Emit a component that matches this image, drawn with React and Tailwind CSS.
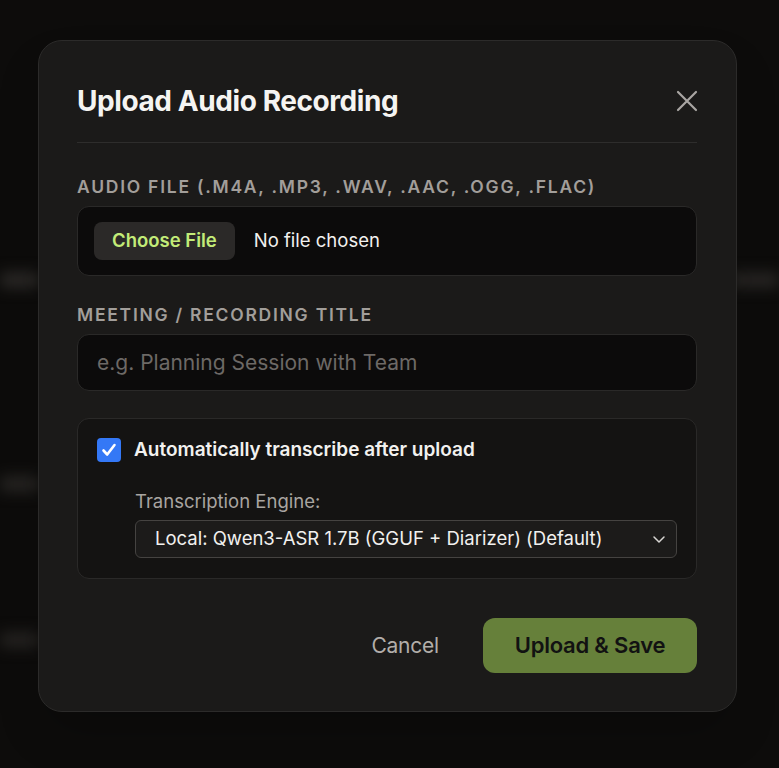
import { useState } from 'react';

export default function App() {
  const [auto, setAuto] = useState(true);
  const [title, setTitle] = useState('');

  return (
    <div
      className="relative min-h-screen w-full overflow-hidden bg-[#0d0c0b]"
      style={{ fontFamily: 'Inter, "Noto Sans", sans-serif' }}
    >
      {/* blurred page behind the dialog */}
      <div className="flex flex-col pt-[272px] blur-[7px]">
        <div className="flex justify-between">
          <div className="h-[16px] w-[40px] rounded bg-[#2a2826]" />
          <div className="h-[16px] w-[50px] rounded bg-[#272523]" />
        </div>
        <div className="mt-[188px] h-[16px] w-[40px] rounded bg-[#262422]" />
        <div className="mt-[140px] h-[16px] w-[40px] rounded bg-[#242220]" />
      </div>

      <div className="absolute inset-0 flex items-start justify-start pl-[38px] pt-[40px]">
        <div className="w-[699px] rounded-[24px] border border-[#2c2b2a] bg-[#1b1a19] pl-[38px] pr-[39px] pt-[40px] pb-[38px] shadow-2xl">
          <div className="flex items-center justify-between pb-[21px] border-b border-[#2e2d2c]">
            <h2 className="text-[28px] font-bold text-[#f5f4f2] tracking-[-0.015em] leading-[40px]">
              Upload Audio Recording
            </h2>
            <button className="mr-[-1px] text-[#a9a6a3]">
              <svg width="22" height="22" viewBox="0 0 22 22" fill="none" stroke="currentColor" strokeWidth="2.2" strokeLinecap="round">
                <path d="M2 2L20 20M20 2L2 20" />
              </svg>
            </button>
          </div>

          <label className="mt-[33px] block text-[17.5px] font-semibold uppercase tracking-[0.1em] text-[#a29e9a] leading-[22px]">
            Audio File (.m4a, .mp3, .wav, .aac, .ogg, .flac)
          </label>
          <div className="mt-[8px] flex h-[70px] items-center gap-[19px] rounded-[12px] border border-[#2a2928] bg-[#0c0b0b] px-[16px]">
            <button className="h-[38px] rounded-[8px] bg-[#2b2928] px-[18px] text-[18.5px] font-semibold text-[#c3ec78]">
              Choose File
            </button>
            <span className="text-[18.5px] text-[#f2f1ef]">No file chosen</span>
          </div>

          <label className="mt-[28px] block text-[17.5px] font-semibold uppercase tracking-[0.1em] text-[#a29e9a] leading-[22px]">
            Meeting / Recording Title
          </label>
          <input
            value={title}
            onChange={(e) => setTitle(e.target.value)}
            placeholder="e.g. Planning Session with Team"
            className="mt-[8px] block h-[57px] w-full rounded-[12px] border border-[#2a2928] bg-[#0c0b0b] px-[19px] text-[21px] text-[#f2f1ef] placeholder:text-[#6d6966] outline-none"
          />

          <div className="mt-[27px] rounded-[12px] border border-[#2a2928] bg-[#141312] px-[19px] pt-[19px] pb-[20px]">
            <label className="flex items-center gap-[13px]">
              <span
                onClick={() => setAuto(!auto)}
                className={auto ? 'flex h-[24px] w-[24px] items-center justify-center rounded-[4px] bg-[#3478f6]' : 'flex h-[24px] w-[24px] items-center justify-center rounded-[4px] border border-[#666] bg-[#1b1a19]'}
              >
                {auto && (
                  <svg width="16" height="16" viewBox="0 0 16 16" fill="none" stroke="white" strokeWidth="2.6" strokeLinecap="round" strokeLinejoin="round">
                    <path d="M2.5 8.5L6.2 12.5L13.5 3" />
                  </svg>
                )}
              </span>
              <span className="text-[19px] font-semibold leading-[24px] text-[#f2f1ef]">Automatically transcribe after upload</span>
            </label>

            <div className="ml-[38px] mt-[27px]">
              <div className="text-[18.5px] text-[#a9a5a1] leading-[24px]">Transcription Engine:</div>
              <div className="mt-[7px] flex h-[38px] items-center justify-between rounded-[6px] border border-[#454341] bg-[#1c1b1a] pl-[19px] pr-[10px]">
                <span className="text-[18.5px] text-[#f2f1ef]">Local: Qwen3-ASR 1.7B (GGUF + Diarizer) (Default)</span>
                <svg width="14" height="14" viewBox="0 0 14 14" fill="none" stroke="#d8d6d3" strokeWidth="1.5" strokeLinecap="round" strokeLinejoin="round">
                  <path d="M2 5L7 10L12 5" />
                </svg>
              </div>
            </div>
          </div>

          <div className="mt-[39px] flex items-center justify-end gap-[44px]">
            <button className="text-[21px] text-[#b2aeaa] tracking-[-0.01em]">Cancel</button>
            <button className="h-[55px] w-[214px] rounded-[12px] bg-[#66803a] text-[22px] font-semibold text-[#121212] tracking-[-0.01em]">
              Upload &amp; Save
            </button>
          </div>
        </div>
      </div>
    </div>
  );
}
